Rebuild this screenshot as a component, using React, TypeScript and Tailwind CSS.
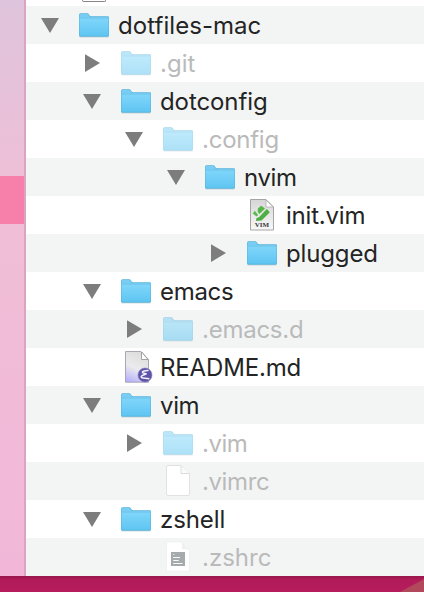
type Kind = "folder" | "vim" | "emacs" | "blank" | "shell";

type Entry = {
  name: string;
  depth: string;
  kind: Kind;
  arrow?: "down" | "right";
  dim?: boolean;
  spacing: string;
};

const d0 = "pl-[15px]";
const d1 = "pl-[57px]";
const d2 = "pl-[99px]";
const d3 = "pl-[141px]";
const d4 = "pl-[183px]";

const entries: Entry[] = [
  { name: "dotfiles-mac", depth: d0, kind: "folder", arrow: "down", spacing: "tracking-[0.05px]" },
  { name: ".git", depth: d1, kind: "folder", arrow: "right", dim: true, spacing: "tracking-[0px]" },
  { name: "dotconfig", depth: d1, kind: "folder", arrow: "down", spacing: "tracking-[-0.1px]" },
  { name: ".config", depth: d2, kind: "folder", arrow: "down", dim: true, spacing: "tracking-[-0.25px]" },
  { name: "nvim", depth: d3, kind: "folder", arrow: "down", spacing: "tracking-[-0.35px]" },
  { name: "init.vim", depth: d4, kind: "vim", spacing: "tracking-[-0.2px]" },
  { name: "plugged", depth: d4, kind: "folder", arrow: "right", spacing: "tracking-[-0.15px]" },
  { name: "emacs", depth: d1, kind: "folder", arrow: "down", spacing: "tracking-[-0.3px]" },
  { name: ".emacs.d", depth: d2, kind: "folder", arrow: "right", dim: true, spacing: "tracking-[-0.25px]" },
  { name: "README.md", depth: d1, kind: "emacs", spacing: "tracking-[-0.15px]" },
  { name: "vim", depth: d1, kind: "folder", arrow: "down", spacing: "tracking-[-0.35px]" },
  { name: ".vim", depth: d2, kind: "folder", arrow: "right", dim: true, spacing: "tracking-[-0.5px]" },
  { name: ".vimrc", depth: d2, kind: "blank", dim: true, spacing: "tracking-[-0.4px]" },
  { name: "zshell", depth: d1, kind: "folder", arrow: "down", spacing: "tracking-[-0.1px]" },
  { name: ".zshrc", depth: d2, kind: "shell", dim: true, spacing: "tracking-[0px]" },
];

function Gradients() {
  return (
    <svg width="0" height="0" className="absolute">
      <defs>
        <linearGradient id="folder" x1="0" y1="0" x2="0" y2="1">
          <stop offset="0" stopColor="#80d6fa" />
          <stop offset="1" stopColor="#5fc5f2" />
        </linearGradient>
        <linearGradient id="paper" x1="0" y1="0" x2="0" y2="1">
          <stop offset="0" stopColor="#d6d6d6" />
          <stop offset="1" stopColor="#f8f8f8" />
        </linearGradient>
        <linearGradient id="lilac" x1="0.65" y1="0" x2="0.3" y2="1">
          <stop offset="0" stopColor="#dcdcdc" />
          <stop offset="0.55" stopColor="#ebebed" />
          <stop offset="1" stopColor="#b9b4fa" />
        </linearGradient>
      </defs>
    </svg>
  );
}

function Arrow({ dir }: { dir?: "down" | "right" }) {
  return (
    <svg viewBox="0 0 18 38" className="h-[38px] w-[18px] shrink-0" fill="#7d7d7d">
      {dir === "down" && <path d="M0 12H18L9 27Z" />}
      {dir === "right" && <path d="M2 10.2L17 19L2 28Z" />}
    </svg>
  );
}

function Folder() {
  return (
    <>
      <path d="M0.5 30.2H29.5V31.5H0.5Z" fill="#8c9ba3" opacity="0.35" />
      <path d="M0 9Q0 7.2 1.6 7.2H8.3Q9.3 7.2 9.8 8.2L10.6 9.6Q11 10.2 12 10.2H28.8Q30 10.2 30 11.5V29.3Q30 30.7 28.8 30.7H1.2Q0 30.7 0 29.3Z" fill="#55b2dc" />
      <path d="M0.5 9Q0.5 7.9 1.6 7.9H8.2Q9 7.9 9.4 8.8L10.3 10.3Q10.7 11 12 11H29.4V13H0.5Z" fill="#79cdf3" />
      <path d="M0.5 12.2H29.5V28.8Q29.5 29.8 28.6 29.8H1.4Q0.5 29.8 0.5 28.8Z" fill="url(#folder)" />
      <path d="M0.5 12.1H29.5" stroke="#65bce5" strokeWidth="0.6" />
    </>
  );
}

function Icon({ kind }: { kind: Kind }) {
  return (
    <svg viewBox="0 0 30 38" className="h-[38px] w-[30px] shrink-0 overflow-visible">
      {kind === "folder" && <Folder />}
      {kind === "vim" && (
        <>
          <path d="M3.5 3.5H19L26.5 11V34H3.5Z" fill="url(#paper)" stroke="#9c9c9c" strokeWidth="0.9" />
          <path d="M19 4L26 11H19Z" fill="#fff" stroke="#a8a8a8" strokeWidth="0.7" />
          <path d="M14.2 9.8L18 12.5L12.4 18L10.8 16V12.6Z" fill="#55b846" />
          <path d="M7.8 14.8L11.2 19L9.6 20.6L5.8 17.6Z" fill="#5cbb50" />
          <path d="M19.8 13L22.8 16.3L14.6 24.6L9 25L9.4 22.2L12.2 21Z" fill="#4fae45" />
          <text x="15" y="31.2" textAnchor="middle" fontFamily="Liberation Serif, serif" fontSize="7" fontWeight="700" fill="#3a3a3a">VIM</text>
        </>
      )}
      {kind === "emacs" && (
        <>
          <path d="M4.5 3.5H20L27.5 11.5V34.2H4.5Z" fill="url(#lilac)" stroke="#a09fa8" strokeWidth="0.9" />
          <path d="M20.5 4L27 11.5H20.5Z" fill="#fff" stroke="#8f8f8f" strokeWidth="0.8" />
          <circle cx="24" cy="27" r="7" fill="#5e54a7" stroke="#8178c4" strokeWidth="0.6" />
          <path d="M27 22.6C23 22.6 20.6 23.5 21.7 24.7C22.5 25.5 25.3 25.3 25.3 25.8C25.3 26.3 19.6 27.2 20.2 29C20.8 30.8 25.5 29.7 27.8 30.8" fill="none" stroke="#f3f0ff" strokeWidth="1.5" strokeLinecap="round" />
        </>
      )}
      {kind === "blank" && (
        <>
          <path d="M5 3.5H18L26.5 12V32Q26.5 33.5 25 33.5H5Q3.5 33.5 3.5 32V5Q3.5 3.5 5 3.5Z" fill="#fff" stroke="#dadbdb" strokeWidth="0.8" />
          <path d="M18 4V11.5H26.5" fill="#fafafa" stroke="#cfd0d0" strokeWidth="0.7" />
        </>
      )}
      {kind === "shell" && (
        <>
          <path d="M3.5 4H18L26.5 12V33.2H3.5Z" fill="#fff" stroke="#ebecec" strokeWidth="0.7" />
          <path d="M18 4.5C20 6.5 18.5 10.5 19.2 11C20 11.8 23 11 26 12L18 4Z" fill="#f0f0f0" />
          <path d="M8 14H22V28H8Z" fill="#a5abad" />
          <path d="M10.2 16.5H11.2M10.2 19.5H17M10.2 22.5H15.8M10.2 25.5H19.5" stroke="#f7f8f8" strokeWidth="1" />
        </>
      )}
    </svg>
  );
}

function Row({ entry, striped }: { entry: Entry; striped: boolean }) {
  return (
    <li className={`flex h-[38px] items-center ${entry.depth} ${striped ? "bg-[#f3f5f5]" : "bg-white"}`}>
      <Arrow dir={entry.arrow} />
      <span className={`ml-5 flex ${entry.dim && entry.kind === "folder" ? "opacity-50" : ""}`}>
        <Icon kind={entry.kind} />
      </span>
      <span className={`ml-[9px] pt-0.5 text-2xl leading-[38px] whitespace-nowrap ${entry.spacing} ${entry.dim ? "text-[#bababa]" : "text-[#242424]"}`}>
        {entry.name}
      </span>
    </li>
  );
}

export default function App() {
  return (
    <div className="flex h-[592px] w-[424px] flex-col overflow-hidden font-['Inter',sans-serif]">
      <Gradients />
      <div className="flex h-[576px]">
        <aside className="flex w-[26px] shrink-0 flex-col border-r-2 border-[#d9a5bf] bg-linear-to-b from-[#dec4dc] via-[#f0bfd7] via-35% to-[#f2b7d8]">
          <div className="mt-[176px] h-12 bg-[#f780aa]" />
        </aside>
        <main className="flex-1 bg-white">
          <div className="h-1.5 pl-14">
            <div className="h-0.5 w-6 rounded-b-[2px] border-x border-b border-[#888] bg-white" />
          </div>
          <ul>
            {entries.map((entry, i) => (
              <Row key={entry.name} entry={entry} striped={i % 2 === 0} />
            ))}
          </ul>
        </main>
      </div>
      <footer className="flex h-4 justify-end bg-linear-to-b from-[#98184b] via-[#b11b59] via-25% to-[#b61c5c]">
        <svg viewBox="0 0 24 16" className="h-4 w-6">
          <path d="M0 16L24 3V16Z" fill="#b2485b" />
        </svg>
      </footer>
    </div>
  );
}
